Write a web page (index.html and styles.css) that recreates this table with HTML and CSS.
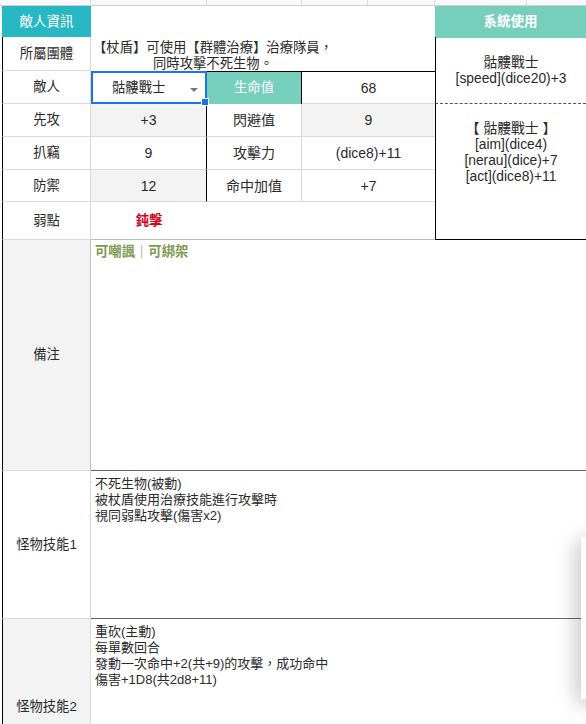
FILE: index.html
```html
<!DOCTYPE html>
<html lang="zh-Hant">
<head>
<meta charset="utf-8">
<title>敵人資訊</title>
<link rel="stylesheet" href="styles.css">
</head>
<body>
<div class="strip">
  <span class="sc c1"></span><span class="sc c2"></span><span class="sc c3"></span><span class="sc c4"></span><span class="sc c5"></span><span class="sc c6"></span><span class="sc c7"></span>
</div>
<div class="sheet">
  <div class="cell hd1">敵人資訊</div>
  <div class="cell topblank"></div>
  <div class="cell hd2">系統使用</div>

  <div class="cell lab">所屬團體</div>
  <div class="cell group"><p class="grouptext">【杖盾】可使用【群體治療】治療隊員，<br>同時攻擊不死生物。</p></div>
  <div class="cell sys1">骷髏戰士<br>[speed](dice20)+3</div>

  <div class="cell lab">敵人</div>
  <div class="cell pick"><span class="picktext">骷髏戰士</span><span class="arrow"></span><span class="handle"></span></div>
  <div class="cell hp">生命值</div>
  <div class="cell val hpv">68</div>

  <div class="cell lab">先攻</div>
  <div class="cell val bcol shade">+3</div>
  <div class="cell val">閃避值</div>
  <div class="cell val dcol shade">9</div>
  <div class="cell sys2">【 骷髏戰士 】<br>[aim](dice4)<br>[nerau](dice)+7<br>[act](dice8)+11</div>

  <div class="cell lab">扒竊</div>
  <div class="cell val bcol">9</div>
  <div class="cell val">攻擊力</div>
  <div class="cell val dcol">(dice8)+11</div>

  <div class="cell lab">防禦</div>
  <div class="cell val bcol shade">12</div>
  <div class="cell val">命中加值</div>
  <div class="cell val dcol">+7</div>

  <div class="cell lab">弱點</div>
  <div class="cell weak">鈍擊</div>
  <div class="cell weakrest"></div>

  <div class="cell lab shade notelab">備注</div>
  <div class="cell notes"><span class="tags">可嘲諷｜可綁架</span></div>

  <div class="cell lab">怪物技能1</div>
  <div class="cell skill">不死生物(被動)<br>被杖盾使用治療技能進行攻擊時<br>視同弱點攻擊(傷害x2)</div>

  <div class="cell lab shade">怪物技能2</div>
  <div class="cell skill">重砍(主動)<br>每單數回合<br>發動一次命中+2(共+9)的攻擊，成功命中<br>傷害+1D8(共2d8+11)</div>
</div>
<div class="sidepanel"></div>
</body>
</html>
```

FILE: styles.css
```css
html, body {
  margin: 0;
  padding: 0;
  width: 586px;
  height: 724px;
  overflow: hidden;
  background: #fff;
}
body {
  position: relative;
  font-family: "Liberation Sans", "Noto Sans CJK TC", sans-serif;
  font-size: 13.33px;
  color: #2a2a2a;
}
.strip {
  display: flex;
  height: 6px;
  box-sizing: border-box;
  border-bottom: 1px solid #d0d0d0;
  background: #f8f9fa;
}
.sc {
  box-sizing: border-box;
  border-right: 1px solid #dcdcdc;
  height: 5px;
}
.c1 { width: 2px; border-right: none; }
.c2 { width: 89px; }
.c3 { width: 116px; }
.c4 { width: 95px; }
.c5 { width: 66px; }
.c6 { width: 67px; }
.c7 { width: 92px; }

.sheet {
  margin-left: 2px;
  display: grid;
  grid-template-columns: 89px 116px 95px 133px 151px;
  grid-template-rows: 31px 34px 33px 33px 33px 32px 38px 231px 148px 176px;
}
.cell {
  box-sizing: border-box;
  display: flex;
  align-items: center;
  justify-content: center;
  text-align: center;
  line-height: 16px;
  border-right: 1px solid #dadada;
  border-bottom: 1px solid #dadada;
  min-width: 0;
}
.hd1 {
  background: #27b8c3;
  color: #fff;
  border: none;
  font-size: 13.5px;
}
.topblank {
  grid-column: 2 / 5;
  border: none;
}
.hd2 {
  background: #76cfbc;
  color: #fff;
  font-weight: bold;
  border: none;
  font-size: 13.5px;
  margin-bottom: -1px;
}
.lab {
  grid-column: 1;
  border-left: 1px solid #000;
}
.shade { background: #f3f3f3; }

.group {
  grid-column: 2 / 5;
  border: none;
  padding-right: 100px;
  padding-top: 3px;
}
.grouptext { margin: 0; }

.sys1 {
  grid-column: 5;
  grid-row: 2 / 4;
  border-right: none;
  border-left: 1px solid #000;
  border-bottom: 1px dashed #555;
  padding-top: 1px;
  font-size: 13.8px;
}
.sys2 {
  grid-column: 5;
  grid-row: 4 / 8;
  border-right: none;
  border-left: 1px solid #000;
  border-bottom: 1px solid #000;
  align-items: flex-start;
  padding-top: 17px;
  font-size: 13.8px;
}

.pick {
  position: relative;
  border: 2px solid #1a73e8;
  justify-content: flex-start;
  padding-left: 19px;
}
.picktext { display: block; }
.arrow {
  position: absolute;
  right: 7px;
  top: 15px;
  width: 0;
  height: 0;
  border-left: 4px solid transparent;
  border-right: 4px solid transparent;
  border-top: 4px solid #777;
}
.handle {
  position: absolute;
  right: -4px;
  bottom: -4px;
  width: 6px;
  height: 6px;
  background: #1a73e8;
  border: 1px solid #fff;
}
.hp {
  background: #76cfbc;
  color: #fff;
  border-top: 1px solid #000;
  border-right: 1px solid #000;
  border-bottom: none;
}
.val { font-size: 14px; }
.hpv {
  border-top: 1px solid #000;
  border-right: none;
}
.bcol { border-right: 1px solid #000; }
.dcol { border-right: none; }

.weak {
  color: #d0021b;
  font-weight: bold;
  border-right: none;
  border-bottom: 1px solid #bdbdbd;
}
.weakrest {
  grid-column: 3 / 5;
  border-right: none;
  border-bottom: 1px solid #bdbdbd;
}

.notelab { border-right: 1px solid #bdbdbd; }
.notes {
  grid-column: 2 / 6;
  border-right: none;
  border-bottom: 1px solid #666;
  align-items: flex-start;
  justify-content: flex-start;
  text-align: left;
  padding: 4px 0 0 4px;
}
.tags {
  color: #7e9a4f;
  font-weight: bold;
}
.skill {
  grid-column: 2 / 6;
  border-right: none;
  border-bottom: 1px solid #666;
  align-items: flex-start;
  justify-content: flex-start;
  text-align: left;
  padding: 5px 0 0 4px;
  font-size: 13px;
}

.sidepanel {
  position: absolute;
  left: 581px;
  top: 537px;
  width: 20px;
  height: 162px;
  background: #fff;
  box-shadow: -3px 4px 22px rgba(0, 0, 0, 0.28);
}
```
